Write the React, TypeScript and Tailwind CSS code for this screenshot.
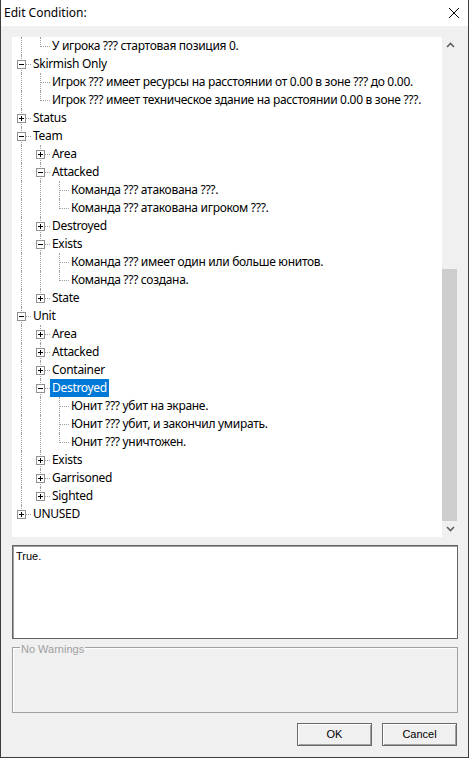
import React from 'react';

type Row = {
  d: number;
  text: string;
  box?: '+' | '-';
  last?: boolean;
  cont: boolean[];
  selected?: boolean;
};

const rows: Row[] = [
  { d: 1, text: 'У игрока ??? стартовая позиция 0.', last: true, cont: [true] },
  { d: 0, text: 'Skirmish Only', box: '-', cont: [] },
  { d: 1, text: 'Игрок ??? имеет ресурсы на расстоянии от 0.00 в зоне ??? до 0.00.', cont: [true] },
  { d: 1, text: 'Игрок ??? имеет техническое здание на расстоянии 0.00 в зоне ???.', last: true, cont: [true] },
  { d: 0, text: 'Status', box: '+', cont: [] },
  { d: 0, text: 'Team', box: '-', cont: [] },
  { d: 1, text: 'Area', box: '+', cont: [true] },
  { d: 1, text: 'Attacked', box: '-', cont: [true] },
  { d: 2, text: 'Команда ??? атакована ???.', cont: [true, true] },
  { d: 2, text: 'Команда ??? атакована игроком ???.', last: true, cont: [true, true] },
  { d: 1, text: 'Destroyed', box: '+', cont: [true] },
  { d: 1, text: 'Exists', box: '-', cont: [true] },
  { d: 2, text: 'Команда ??? имеет один или больше юнитов.', cont: [true, true] },
  { d: 2, text: 'Команда ??? создана.', last: true, cont: [true, true] },
  { d: 1, text: 'State', box: '+', last: true, cont: [true] },
  { d: 0, text: 'Unit', box: '-', cont: [] },
  { d: 1, text: 'Area', box: '+', cont: [true] },
  { d: 1, text: 'Attacked', box: '+', cont: [true] },
  { d: 1, text: 'Container', box: '+', cont: [true] },
  { d: 1, text: 'Destroyed', box: '-', selected: true, cont: [true] },
  { d: 2, text: 'Юнит ??? убит на экране.', cont: [true, true] },
  { d: 2, text: 'Юнит ??? убит, и закончил умирать.', cont: [true, true] },
  { d: 2, text: 'Юнит ??? уничтожен.', last: true, cont: [true, true] },
  { d: 1, text: 'Exists', box: '+', cont: [true] },
  { d: 1, text: 'Garrisoned', box: '+', cont: [true] },
  { d: 1, text: 'Sighted', box: '+', last: true, cont: [true] },
  { d: 0, text: 'UNUSED', box: '+', last: true, cont: [] },
];

const ExpandBox = ({ sign }: { sign: '+' | '-' }) => (
  <div className="absolute left-[5px] top-[5px] w-[9px] h-[9px] bg-white border border-[#919191]">
    <div className="absolute left-[1px] top-[3px] w-[5px] h-px bg-black" />
    {sign === '+' && <div className="absolute left-[3px] top-[1px] w-px h-[5px] bg-black" />}
  </div>
);

const TreeRow = ({ row }: { row: Row }) => (
  <div className="flex h-[18px] items-stretch">
    {row.cont.map((c, k) => (
      <div key={k} className="relative w-[19px] shrink-0">
        {c && <div className="absolute left-[9px] top-0 h-full border-l border-dotted border-[#a0a0a0]" />}
      </div>
    ))}
    <div className="relative w-[19px] shrink-0">
      <div
        className={`absolute left-[9px] top-0 border-l border-dotted border-[#a0a0a0] ${row.last ? 'h-[10px]' : 'h-full'}`}
      />
      <div className="absolute left-[10px] top-[9px] w-[9px] border-t border-dotted border-[#a0a0a0]" />
      {row.box && <ExpandBox sign={row.box} />}
    </div>
    <span
      className={`px-[2px] leading-[18px] whitespace-nowrap tracking-[-0.3px] ${row.selected ? 'bg-[#0078d7] text-white' : 'text-black'}`}
    >
      {row.text}
    </span>
  </div>
);

const Chevron = ({ down }: { down?: boolean }) => (
  <svg width="9" height="6" viewBox="0 0 9 6" className={down ? 'rotate-180' : ''}>
    <path d="M1 5 L4.5 1.5 L8 5" fill="none" stroke="#606060" strokeWidth="1.6" />
  </svg>
);

const DialogButton = ({ label }: { label: string }) => (
  <button className="w-[75px] h-[23px] bg-[#f0f0f0] border border-[#6a6a6a] shadow-[inset_1px_1px_0_#ffffff,inset_-1px_-1px_0_#a0a0a0] text-[11px] text-black font-['Liberation_Sans',Arial,sans-serif]">
    {label}
  </button>
);

export default function App() {
  return (
    <div className="w-[469px] h-[758px] flex flex-col bg-[#f0f0f0] border-l border-r border-b border-[#3c3c3c] font-['Noto_Sans',sans-serif] text-[12px] overflow-hidden">
      {/* title bar */}
      <div className="h-[26px] shrink-0 bg-white flex items-center justify-between pl-[3px] pr-[8px]">
        <span className="text-[12px] text-black">Edit Condition:</span>
        <svg width="12" height="12" viewBox="0 0 12 12">
          <path d="M1 1 L11 11 M11 1 L1 11" stroke="#000" strokeWidth="1" />
        </svg>
      </div>

      <div className="flex flex-col pl-[11px] pr-[10px] pt-[11px]">
        {/* tree */}
        <div className="flex h-[500px]">
          <div className="flex-1 bg-white overflow-hidden">
            {rows.map((r, i) => (
              <TreeRow key={i} row={r} />
            ))}
          </div>
          <div className="w-[16px] flex flex-col bg-[#f0f0f0]">
            <div className="h-[17px] flex items-center justify-center">
              <Chevron />
            </div>
            <div className="flex-1 flex flex-col">
              <div className="h-[215px]" />
              <div className="h-[252px] w-[15px] bg-[#cdcdcd]" />
            </div>
            <div className="h-[17px] flex items-center justify-center">
              <Chevron down />
            </div>
          </div>
        </div>

        {/* text box */}
        <div className="mt-[8px] h-[94px] w-[446px] bg-white border border-[#646464] shadow-[inset_1px_1px_0_#a0a0a0] px-[3px] py-[2px] font-['Liberation_Sans',Arial,sans-serif] text-[11px] text-black">
          True.
        </div>

        {/* warnings group */}
        <div className="mt-[8px] h-[66px] w-[446px] border border-[#a0a0a0] shadow-[inset_1px_1px_0_#ffffff]">
          <span className="relative -top-[8px] ml-[7px] px-[1px] bg-[#f0f0f0] text-[11px] text-[#a0a0a0] font-['Liberation_Sans',Arial,sans-serif]">
            No Warnings
          </span>
        </div>

        {/* buttons */}
        <div className="mt-[10px] w-[446px] flex justify-end gap-[10px] pr-[1px]">
          <DialogButton label="OK" />
          <DialogButton label="Cancel" />
        </div>
      </div>
    </div>
  );
}
